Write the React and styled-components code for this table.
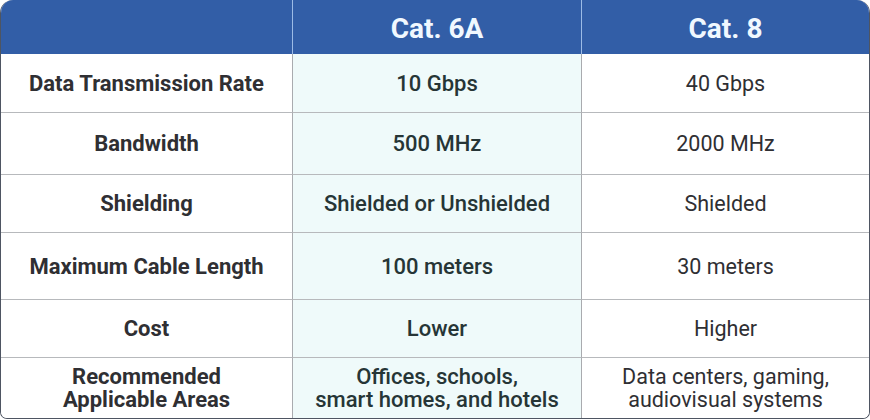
import React from "react";
import styled, { createGlobalStyle } from "styled-components";

const GlobalStyle = createGlobalStyle`
  html, body {
    margin: 0;
    padding: 0;
    background: #ffffff;
  }
  body {
    font-family: Roboto, "Liberation Sans", sans-serif;
  }
`;

const Table = styled.div`
  width: 870px;
  height: 419px;
  box-sizing: border-box;
  display: grid;
  grid-template-columns: 291px 289px 1fr;
  border-radius: 13px 13px 7px 7px;
  border: 1.5px solid #4e5562;
  border-top: none;
  overflow: hidden;
  background: #ffffff;
`;

const HeadCell = styled.div`
  height: 54px;
  background: #325ea7;
  color: #f0f8ff;
  font-size: 28px;
  font-weight: 700;
  display: flex;
  align-items: center;
  justify-content: center;
  padding-top: 2px;
  box-sizing: border-box;
  border-left: ${(p) => (p.$first ? "none" : "1px solid #9cbbe6")};
  margin-left: ${(p) => (p.$first ? "-2px" : "0")};
`;

const Cell = styled.div`
  height: ${(p) => p.$h}px;
  box-sizing: border-box;
  display: flex;
  align-items: center;
  justify-content: center;
  text-align: center;
  font-size: ${(p) => (p.$col === 2 ? 21.5 : 22)}px;
  line-height: 23px;
  padding: 0 6px;
  border-top: ${(p) => (p.$topLine ? "1px solid #b7b9bc" : "none")};
  border-left: ${(p) => (p.$col === 0 ? "none" : "1.5px solid #a9abaf")};
  background: ${(p) => (p.$col === 1 ? "#effafa" : "#ffffff")};
  color: ${(p) => (p.$col === 1 ? "#263536" : "#2f2f33")};
  font-weight: ${(p) => (p.$col === 0 ? 700 : p.$col === 1 ? 500 : 400)};
`;

const rows = [
  { h: 58, cells: ["Data Transmission Rate", "10 Gbps", "40 Gbps"] },
  { h: 62, cells: ["Bandwidth", "500 MHz", "2000 MHz"] },
  { h: 58, cells: ["Shielding", "Shielded or Unshielded", "Shielded"] },
  { h: 67, cells: ["Maximum Cable Length", "100 meters", "30 meters"] },
  { h: 58, cells: ["Cost", "Lower", "Higher"] },
  {
    h: 61,
    cells: [
      ["Recommended", "Applicable Areas"],
      ["Offices, schools,", "smart homes, and hotels"],
      ["Data centers, gaming,", "audiovisual systems"],
    ],
  },
];

const renderText = (t) =>
  Array.isArray(t) ? (
    <span>
      {t[0]}
      <br />
      {t[1]}
    </span>
  ) : (
    t
  );

export default function App() {
  return (
    <>
      <GlobalStyle />
      <Table>
        <HeadCell $first />
        <HeadCell>Cat. 6A</HeadCell>
        <HeadCell>Cat. 8</HeadCell>
        {rows.map((row, i) =>
          row.cells.map((c, j) => (
            <Cell key={`${i}-${j}`} $h={row.h} $col={j} $topLine={i > 0}>
              {renderText(c)}
            </Cell>
          ))
        )}
      </Table>
    </>
  );
}
